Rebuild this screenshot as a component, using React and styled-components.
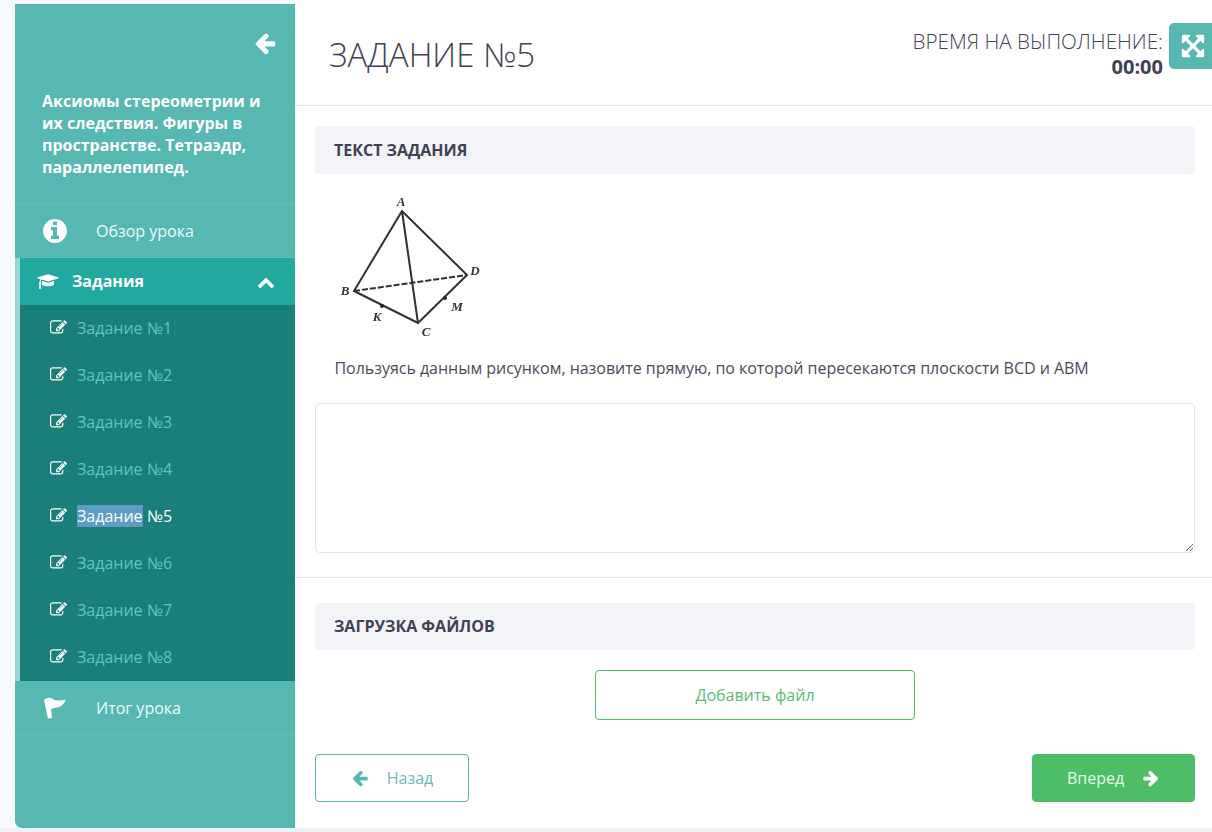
import React from 'react';
import styled, { createGlobalStyle } from 'styled-components';

const GlobalStyle = createGlobalStyle`
  html, body {
    margin: 0;
    height: 100%;
    overflow: hidden;
    background: #eef1f5;
    font-family: "Open Sans", "Noto Sans", sans-serif;
    font-size: 16px;
    color: #3f4254;
  }
  * { box-sizing: border-box; }
`;

// font awesome 4 glyphs, the packaged set only has the newer drawings
const glyphs = {
  arrowLeft: 'M1664 896v128q0 53-32.5 90.5t-84.5 37.5h-704l293 294q38 36 38 90t-38 90l-75 76q-37 37-90 37-52 0-91-37l-651-652q-37-37-37-90 0-52 37-91l651-650q38-38 91-38 52 0 90 38l75 74q38 38 38 91t-38 91l-293 293h704q52 0 84.5 37.5t32.5 90.5z',
  arrowRight: 'M1600 960q0 54-37 91l-651 651q-39 37-91 37-51 0-90-37l-75-75q-38-38-38-91t38-91l293-293h-704q-52 0-84.5-37.5t-32.5-90.5v-128q0-53 32.5-90.5t84.5-37.5h704l-293-294q-38-36-38-90t38-90l75-75q38-38 90-38 53 0 91 38l651 651q37 35 37 90z',
  chevronUp: 'M1683 1331l-166 165q-19 19-45 19t-45-19l-531-531-531 531q-19 19-45 19t-45-19l-166-165q-19-19-19-45.5t19-45.5l742-741q19-19 45-19t45 19l742 741q19 19 19 45.5t-19 45.5z',
  edit: 'M888 1184l116-116-152-152-116 116v56h96v96h56zm440-720q-16-16-33 1l-350 350q-17 17-1 33t33-1l350-350q17-17 1-33zm80 594v190q0 119-84.5 203.5t-203.5 84.5h-832q-119 0-203.5-84.5t-84.5-203.5v-832q0-119 84.5-203.5t203.5-84.5h832q63 0 117 25 15 7 18 23 3 17-9 29l-49 49q-14 14-32 8-23-6-45-6h-832q-66 0-113 47t-47 113v832q0 66 47 113t113 47h832q66 0 113-47t47-113v-126q0-13 9-22l64-64q15-15 35-7t20 29zm-96-738l288 288-672 672h-288v-288zm444 132l-92 92-288-288 92-92q28-28 68-28t68 28l152 152q28 28 28 68t-28 68z',
  expand: 'M1411 541l-355 355 355 355 144-144q29-31 70-14 39 17 39 59v448q0 26-19 45t-45 19h-448q-42 0-59-40-17-39 14-69l144-144-355-355-355 355 144 144q31 30 14 69-17 40-59 40h-448q-26 0-45-19t-19-45v-448q0-42 40-59 39-17 69 14l144 144 355-355-355-355-144 144q-19 19-45 19-12 0-24-5-40-17-40-59v-448q0-26 19-45t45-19h448q42 0 59 40 17 39-14 69l-144 144 355 355 355-355-144-144q-31-30-14-69 17-40 59-40h448q26 0 45 19t19 45v448q0 42-39 59-13 5-25 5-26 0-45-19z',
  info: 'M1152 1376v-160q0-14-9-23t-23-9h-96v-512q0-14-9-23t-23-9h-320q-14 0-23 9t-9 23v160q0 14 9 23t23 9h96v320h-96q-14 0-23 9t-9 23v160q0 14 9 23t23 9h448q14 0 23-9t9-23zm-128-896v-160q0-14-9-23t-23-9h-192q-14 0-23 9t-9 23v160q0 14 9 23t23 9h192q14 0 23-9t9-23zm640 416q0 209-103 385.5t-279.5 279.5-385.5 103-385.5-103-279.5-279.5-103-385.5 103-385.5 279.5-279.5 385.5-103 385.5 103 279.5 279.5 103 385.5z',
};

const Glyph = ({ name, size }) => (
  <svg width={size} height={size} viewBox="0 0 1792 1792" fill="currentColor">
    <path d={glyphs[name]} />
  </svg>
);

const CapIcon = () => (
  <svg width="22" height="17" viewBox="0 0 2304 1792" fill="currentColor">
    <path d="M1774 836l18 316q4 69-82 128t-235 93.5-323 34.5-323-34.5-235-93.5-82-128l18-316 574 181q22 7 48 7t48-7zm530-324q0 23-22 31l-1120 352q-4 1-10 1t-10-1l-652-206q-43 34-71 111.5t-34 178.5q63 36 63 109 0 69-58 107l58 433q2 14-8 25-9 11-24 11h-192q-15 0-24-11-10-11-8-25l58-433q-58-38-58-107 0-73 65-111 11-207 98-330l-333-104q-22-8-22-31t22-31l1120-352q4-1 10-1t10 1l1120 352q22 8 22 31z" />
  </svg>
);

const FlagIcon = () => (
  <svg width="24" height="24" viewBox="0 0 24 24" fill="currentColor">
    <path d="M1 4C4 1.500 7 1 10 3C13 5 17 5 23 3.500C21 8 18 11 14 11.500C11 12 9.500 12 8 13.500L9 22L5 22.500L2.500 11Z" />
  </svg>
);

const Shell = styled.div`
  display: flex;
  height: 828px;
  padding-left: 15px;
  background: #f6fafd;
`;

const Sidebar = styled.aside`
  width: 280px;
  flex-shrink: 0;
  margin-top: 4px;
  background: #56b8b1;
  border-bottom-left-radius: 7px;
  color: #fff;
`;

const SidebarHead = styled.div`
  height: 201px;
  padding: 27px 24px 0 27px;
  border-bottom: 1px solid #62bdb6;
`;

const BackLink = styled.div`
  display: flex;
  justify-content: flex-end;
  height: 59px;
  margin-right: -6px;
`;

const LessonTitle = styled.div`
  font-weight: 700;
  font-size: 16px;
  line-height: 22px;
`;

const NavRow = styled.div`
  display: flex;
  align-items: center;
  height: ${({ $height }) => $height}px;
  padding-left: 28px;
  border-bottom: 1px solid #62bdb6;
  background: #56b8b1;
`;

const NavIcon = styled.span`
  display: flex;
  justify-content: center;
  width: 24px;
  margin-right: 29px;
  & svg {
    flex-shrink: 0;
  }
`;

const NavText = styled.span`
  font-size: 16px;
  color: #eefaf8;
`;

const ActiveGroup = styled.div`
  border-left: 5px solid #9ad6d1;
`;

const ActiveHead = styled.div`
  display: flex;
  align-items: center;
  height: 47px;
  padding: 0 20px 0 17px;
  background: #22a99f;
  font-weight: 700;
`;

const ActiveLabel = styled.span`
  flex-grow: 1;
  margin: -2px 0 0 13px;
`;

const TaskList = styled.div`
  background: #1a7f78;
  height: 376px;
`;

const TaskItem = styled.div`
  display: flex;
  align-items: center;
  height: 47px;
  padding: 0 0 2px 30px;
  color: ${({ $current }) => ($current ? '#fff' : '#62c4bc')};
  & svg {
    flex-shrink: 0;
    color: #fff;
    margin-right: 10px;
  }
`;

const Selected = styled.span`
  background: #5f9cc5;
`;

const Main = styled.main`
  flex: 1;
  position: relative;
  display: flex;
  flex-direction: column;
  background: #fff;
`;

const Header = styled.header`
  display: flex;
  justify-content: space-between;
  align-items: center;
  height: 106px;
  padding: 4px 49px 0 34px;
  border-bottom: 1px solid #e6e7eb;
`;

const Title = styled.h1`
  margin: 0;
  font-size: 33px;
  font-weight: 300;
  color: #3f4254;
`;

const Timer = styled.div`
  text-align: right;
  font-size: 20.6px;
  font-weight: 300;
  line-height: 26px;
`;

const TimerLabel = styled.div`
  margin-top: -1px;
`;

const TimerValue = styled.div`
  margin-bottom: 1px;
  font-size: 20px;
  font-weight: 700;
`;

const FullscreenButton = styled.button`
  position: absolute;
  top: 23px;
  right: -6px;
  display: flex;
  align-items: center;
  justify-content: flex-start;
  width: 49px;
  height: 46px;
  padding: 0 0 0 11px;
  border: none;
  border-radius: 5px;
  background: #56b8b1;
  color: #fff;
`;

const Body = styled.div`
  padding: ${({ $top }) => $top}px 17px 0 20px;
`;

const SectionHead = styled.div`
  display: flex;
  align-items: center;
  height: ${({ $height }) => $height}px;
  padding: 0 0 ${({ $height }) => 48 - $height}px 19px;
  border-radius: 4px;
  background: #f3f4f8;
  font-size: 16px;
  font-weight: 700;
`;

const Figure = styled.svg`
  display: block;
  margin: 16px 0 0 20px;
  filter: blur(0.5px);
`;

const Question = styled.p`
  margin: 16px 0 23px 19.500px;
  line-height: 24px;
  color: #494c5c;
  letter-spacing: -0.03px;
`;

const Answer = styled.textarea`
  display: block;
  width: 100%;
  height: 150px;
  border: 1px solid #e2e3e7;
  border-radius: 5px;
  background: #fff;
  outline: none;
`;

const Divider = styled.div`
  height: 1px;
  margin-top: 24px;
  background: #e6e7eb;
`;

const UploadRow = styled.div`
  display: flex;
  justify-content: center;
  margin-top: 20px;
`;

const AddFile = styled.button`
  width: 320px;
  height: 50px;
  border: 1px solid #4dbd68;
  border-radius: 4px;
  background: #fff;
  color: #5dba77;
  font: inherit;
`;

const Pager = styled.div`
  display: flex;
  justify-content: space-between;
  margin-top: 34px;
`;

const PagerButton = styled.button`
  display: flex;
  align-items: center;
  justify-content: center;
  height: 48px;
  width: ${({ $next }) => ($next ? 163 : 154)}px;
  gap: 18px;
  padding: 0;
  border: 1px solid ${({ $next }) => ($next ? '#4dbd68' : '#56b8b1')};
  border-radius: 4px;
  background: ${({ $next }) => ($next ? '#4dbd68' : '#fff')};
  color: ${({ $next }) => ($next ? '#e8fbee' : '#6fb9b4')};
  font: inherit;
  & svg {
    color: ${({ $next }) => ($next ? '#fff' : '#56b8b1')};
  }
`;

const Label = styled.text`
  font-family: "Liberation Serif", serif;
  font-style: italic;
  font-weight: 700;
  font-size: 13px;
  fill: #333;
  text-anchor: middle;
`;

const TetrahedronFigure = () => (
  <Figure width="150" height="150" viewBox="0 0 150 150">
    <g stroke="#303030" strokeWidth="2" fill="none">
      <path d="M67 21 19 101 83 133 132 85Z" />
      <path d="M67 21 83 133" />
      <path d="M19 101 132 85" strokeDasharray="6 2" />
    </g>
    <circle cx="47" cy="116" r="2" fill="#222" />
    <circle cx="110" cy="108" r="2" fill="#222" />
    <Label x="66" y="16">A</Label>
    <Label x="10" y="105">B</Label>
    <Label x="91" y="146">C</Label>
    <Label x="140" y="85">D</Label>
    <Label x="42" y="131">K</Label>
    <Label x="122" y="121">M</Label>
  </Figure>
);

const tasks = [1, 2, 3, 4, 5, 6, 7, 8];

const App = () => (
  <React.Fragment>
    <GlobalStyle />
    <Shell>
      <Sidebar>
        <SidebarHead>
          <BackLink><Glyph name="arrowLeft" size={24} /></BackLink>
          <LessonTitle>Аксиомы стереометрии и их следствия. Фигуры в пространстве. Тетраэдр, параллелепипед.</LessonTitle>
        </SidebarHead>
        <NavRow $height={53}>
          <NavIcon><Glyph name="info" size={28} /></NavIcon>
          <NavText>Обзор урока</NavText>
        </NavRow>
        <ActiveGroup>
          <ActiveHead>
            <CapIcon />
            <ActiveLabel>Задания</ActiveLabel>
            <Glyph name="chevronUp" size={18} />
          </ActiveHead>
          <TaskList>
            {tasks.map((n) => (
              <TaskItem key={n} $current={n === 5}>
                <Glyph name="edit" size={17} />
                {n === 5 ? <span><Selected>Задание</Selected> №5</span> : `Задание №${n}`}
              </TaskItem>
            ))}
          </TaskList>
        </ActiveGroup>
        <NavRow $height={54}>
          <NavIcon><FlagIcon /></NavIcon>
          <NavText>Итог урока</NavText>
        </NavRow>
      </Sidebar>
      <Main>
        <Header>
          <Title>ЗАДАНИЕ №5</Title>
          <Timer>
            <TimerLabel>ВРЕМЯ НА ВЫПОЛНЕНИЕ:</TimerLabel>
            <TimerValue>00:00</TimerValue>
          </Timer>
        </Header>
        <FullscreenButton><Glyph name="expand" size={26} /></FullscreenButton>
        <Body $top={20}>
          <SectionHead $height={48}>ТЕКСТ ЗАДАНИЯ</SectionHead>
          <TetrahedronFigure />
          <Question>Пользуясь данным рисунком, назовите прямую, по которой пересекаются плоскости BCD и ABM</Question>
          <Answer />
        </Body>
        <Divider />
        <Body $top={25}>
          <SectionHead $height={47}>ЗАГРУЗКА ФАЙЛОВ</SectionHead>
          <UploadRow><AddFile>Добавить файл</AddFile></UploadRow>
          <Pager>
            <PagerButton><Glyph name="arrowLeft" size={18} />Назад</PagerButton>
            <PagerButton $next>Вперед<Glyph name="arrowRight" size={18} /></PagerButton>
          </Pager>
        </Body>
      </Main>
    </Shell>
  </React.Fragment>
);

export default App;
